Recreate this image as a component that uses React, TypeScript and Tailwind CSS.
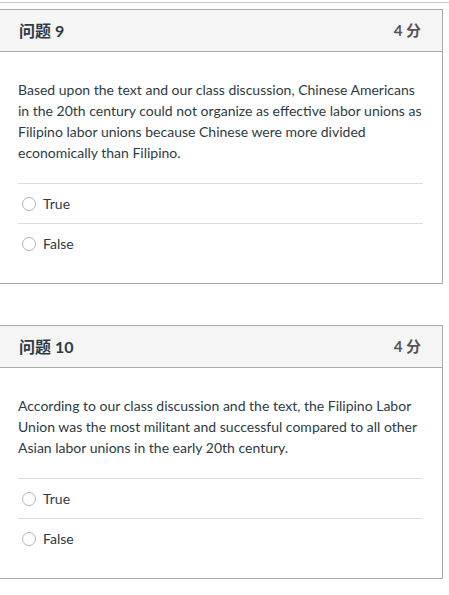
const questions = [
  {
    title: '问题 9',
    points: '4 分',
    text: 'Based upon the text and our class discussion, Chinese Americans in the 20th century could not organize as effective labor unions as Filipino labor unions because Chinese were more divided economically than Filipino.',
  },
  {
    title: '问题 10',
    points: '4 分',
    text: 'According to our class discussion and the text, the Filipino Labor Union was the most militant and successful compared to all other Asian labor unions in the early 20th century.',
  },
];

function QuestionCard({ title, points, text }: { title: string; points: string; text: string }) {
  return (
    <div className="-ml-[2px] w-[445px] border border-[#a9a9a9] bg-white">
      <div className="flex h-[42px] items-center justify-between border-b border-[#a9a9a9] bg-[#f5f5f5] pl-[20px] pr-[21px]">
        <h2 className="text-[16px] font-bold text-[#2d3b45]">{title}</h2>
        <span className="text-[15px] font-bold text-[#555]">{points}</span>
      </div>
      <div className="px-[19px] pt-[27px] pb-[20px]">
        <p className="text-[14px] leading-[21px] text-[#2d3b45]">{text}</p>
        <div className="mt-[20px]">
          {['True', 'False'].map((label) => (
            <label key={label} className="flex h-[40px] items-center gap-[7px] border-t border-[#dcdcdc] pl-[4px]">
              <span className="h-[14px] w-[14px] rounded-full border border-[#b3b3b3] bg-white" />
              <span className="text-[14px] text-[#2d3b45]">{label}</span>
            </label>
          ))}
        </div>
      </div>
    </div>
  );
}

export default function App() {
  return (
    <div className="min-h-[595px] w-[449px] bg-white font-['Lato','Noto_Sans_CJK_SC',sans-serif]">
      <div className="h-[3px] border-b border-[#c8c8c8]" />
      <div className="flex flex-col gap-[41px] pt-[6px]">
        {questions.map((q) => (
          <QuestionCard key={q.title} {...q} />
        ))}
      </div>
    </div>
  );
}
